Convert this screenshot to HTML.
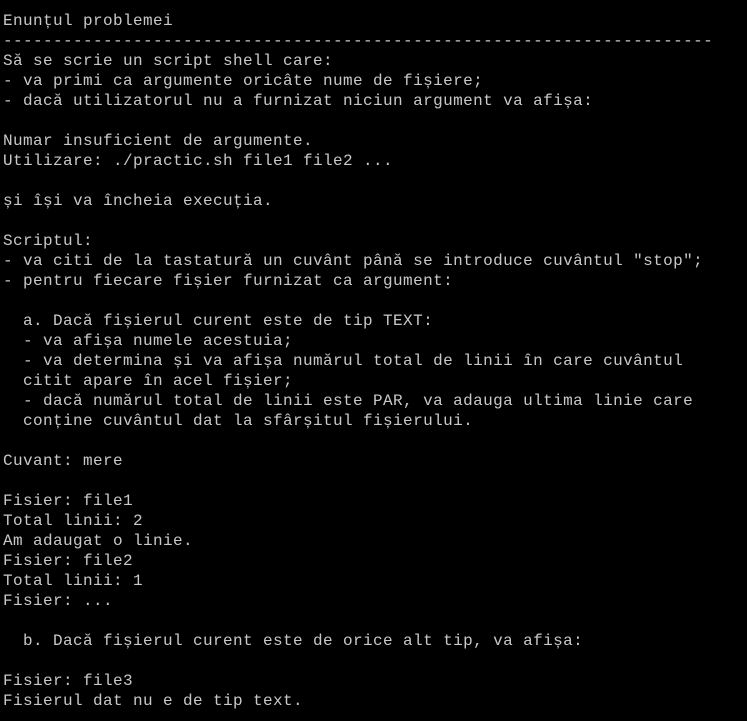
<!DOCTYPE html>
<html><head><meta charset="utf-8"><style>
html,body{margin:0;padding:0;background:#000;width:747px;height:721px;overflow:hidden}
pre{margin:0;padding:11px 0 0 3px;font-family:"Liberation Mono",monospace;font-size:16px;letter-spacing:0.4px;line-height:20px;color:#c8c8c8;white-space:pre}
</style></head><body><pre>Enunțul problemei
-----------------------------------------------------------------------
Să se scrie un script shell care:
- va primi ca argumente oricâte nume de fișiere;
- dacă utilizatorul nu a furnizat niciun argument va afișa:

Numar insuficient de argumente.
Utilizare: ./practic.sh file1 file2 ...

și își va încheia execuția.

Scriptul:
- va citi de la tastatură un cuvânt până se introduce cuvântul "stop";
- pentru fiecare fișier furnizat ca argument:

  a. Dacă fișierul curent este de tip TEXT:
  - va afișa numele acestuia;
  - va determina și va afișa numărul total de linii în care cuvântul
  citit apare în acel fișier;
  - dacă numărul total de linii este PAR, va adauga ultima linie care
  conține cuvântul dat la sfârșitul fișierului.

Cuvant: mere

Fisier: file1
Total linii: 2
Am adaugat o linie.
Fisier: file2
Total linii: 1
Fisier: ...

  b. Dacă fișierul curent este de orice alt tip, va afișa:

Fisier: file3
Fisierul dat nu e de tip text.</pre></body></html>
